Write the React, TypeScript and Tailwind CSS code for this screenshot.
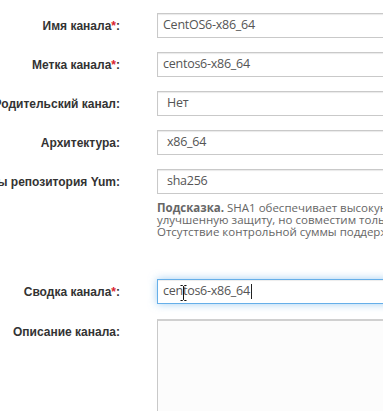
import React from "react";

const labelFont = { fontFamily: '"Liberation Sans", Arial, sans-serif' };
const inputFont = { fontFamily: '"Open Sans", "Noto Sans", sans-serif' };

function Label({ text, req }: { text: string; req?: boolean }) {
  return (
    <div className="w-[120px] shrink-0 flex justify-end">
      <span
        className="whitespace-nowrap shrink-0 text-[12px] font-bold text-[#333] leading-[14px]"
        style={labelFont}
      >
        {text}
        {req && <span className="text-[#d9232e]">*</span>}:
      </span>
    </div>
  );
}

function Field({ value, pl = "pl-[5px]" }: { value: string; pl?: string }) {
  return (
    <div
      className={`ml-[37px] w-[300px] shrink-0 h-[25px] border border-[#c9c9c9] bg-white shadow-[inset_0_1px_1px_rgba(0,0,0,0.09)] flex items-center ${pl} text-[12.5px] tracking-[-0.25px] text-[#555]`}
      style={inputFont}
    >
      {value}
    </div>
  );
}

export default function App() {
  return (
    <div className="w-[383px] h-[411px] overflow-hidden bg-white relative">
      <div className="pt-[13px] flex flex-col">
        <div className="flex items-center h-[25px]">
          <Label text="Имя канала" req />
          <Field value="CentOS6-x86_64" />
        </div>
        <div className="flex items-center h-[25px] mt-[14px]">
          <Label text="Метка канала" req />
          <Field value="centos6-x86_64" />
        </div>
        <div className="flex items-center h-[25px] mt-[14px]">
          <Label text="Родительский канал" />
          <Field value="Нет" pl="pl-[9px]" />
        </div>
        <div className="flex items-center h-[25px] mt-[14px]">
          <Label text="Архитектура" />
          <Field value="x86_64" pl="pl-[9px]" />
        </div>
        <div className="flex items-center h-[25px] mt-[14px]">
          <Label text="Контрольные суммы репозитория Yum" />
          <Field value="sha256" pl="pl-[9px]" />
        </div>
        <div
          className="ml-[157px] mt-[8px] text-[11.5px] leading-[12px] text-[#666] whitespace-nowrap"
          style={inputFont}
        >
          <div>
            <span className="font-bold">Подсказка.</span> SHA1 обеспечивает высокую совместимость со старыми клиентами.
          </div>
          <div>улучшенную защиту, но совместим только с новыми клиентами.</div>
          <div>Отсутствие контрольной суммы поддерживается только для новых клиентов.</div>
        </div>
        <div className="flex items-center h-[25px] mt-[41px]">
          <Label text="Сводка канала" req />
          <div
            className="relative ml-[37px] w-[300px] shrink-0 h-[25px] border border-[#66afe9] bg-white shadow-[inset_0_1px_1px_rgba(0,0,0,0.075),0_0_8px_rgba(102,175,233,0.6)] flex items-center pl-[5px] text-[12.5px] tracking-[-0.25px] text-[#555]"
            style={inputFont}
          >
            <span>centos6-x86_64</span>
            <span className="w-px h-[15px] bg-[#222] ml-px"></span>
            <svg
              className="absolute left-[22px] top-[5px]"
              width="7"
              height="16"
              viewBox="0 0 7 16"
            >
              <path
                d="M0.5 0.5 H2.5 L3.5 1.5 L4.5 0.5 H6.5 M3.5 1.5 V14.5 M0.5 15.5 H2.5 L3.5 14.5 L4.5 15.5 H6.5"
                stroke="#111"
                strokeWidth="1"
                fill="none"
              />
            </svg>
          </div>
        </div>
        <div className="flex items-start mt-[15px]">
          <div className="pt-[6px]">
            <Label text="Описание канала" />
          </div>
          <div className="ml-[37px] w-[300px] shrink-0 h-[120px] border border-[#c9c9c9] border-t-2 border-t-[#d0d0d0] bg-[#fcfcfc]"></div>
        </div>
      </div>
    </div>
  );
}
